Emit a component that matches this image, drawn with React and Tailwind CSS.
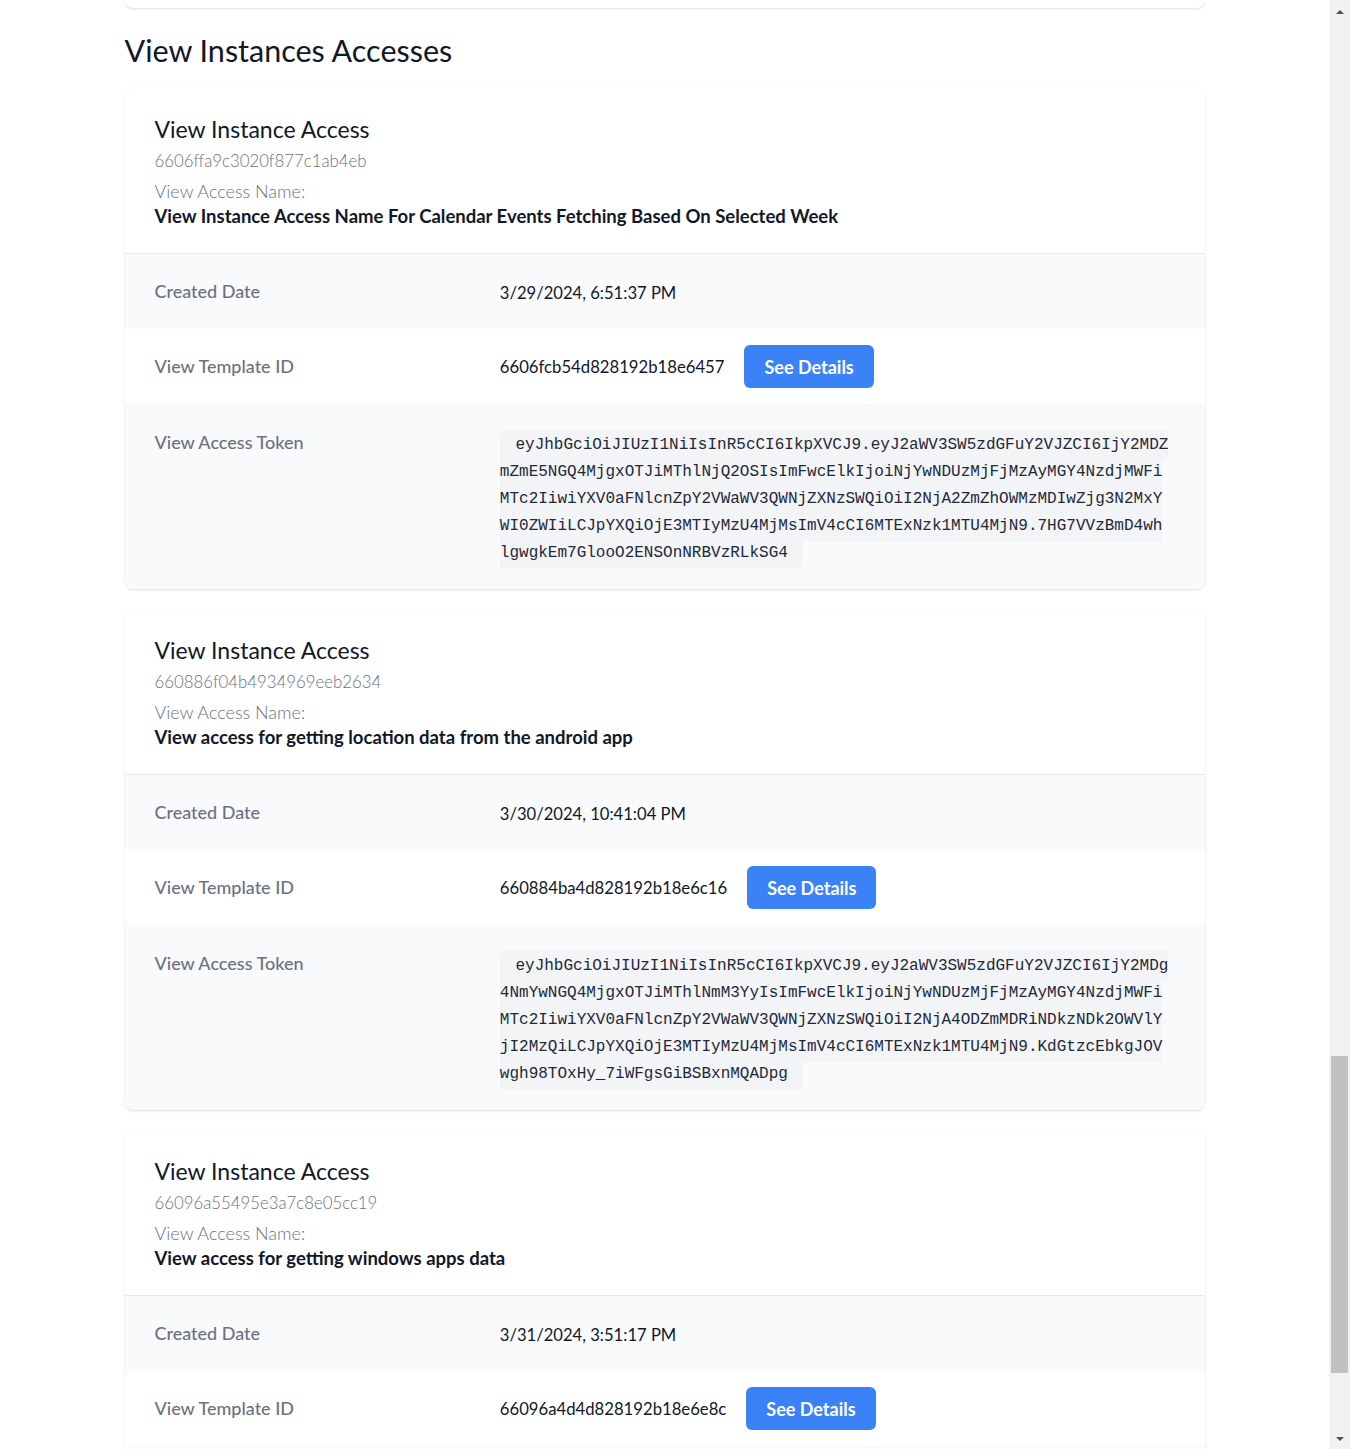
import React from "react";

const sans = { fontFamily: '"Segoe UI", Lato, "Liberation Sans", sans-serif' };
const mono = { fontFamily: '"Liberation Mono", "DejaVu Sans Mono", monospace' };

const accesses = [
  {
    id: "6606ffa9c3020f877c1ab4eb",
    name: "View Instance Access Name For Calendar Events Fetching Based On Selected Week",
    created: "3/29/2024, 6:51:37 PM",
    templateId: "6606fcb54d828192b18e6457",
    token:
      "eyJhbGciOiJIUzI1NiIsInR5cCI6IkpXVCJ9.eyJ2aWV3SW5zdGFuY2VJZCI6IjY2MDZmZmE5NGQ4MjgxOTJiMThlNjQ2OSIsImFwcElkIjoiNjYwNDUzMjFjMzAyMGY4NzdjMWFiMTc2IiwiYXV0aFNlcnZpY2VWaWV3QWNjZXNzSWQiOiI2NjA2ZmZhOWMzMDIwZjg3N2MxYWI0ZWIiLCJpYXQiOjE3MTIyMzU4MjMsImV4cCI6MTExNzk1MTU4MjN9.7HG7VVzBmD4whlgwgkEm7GlooO2ENSOnNRBVzRLkSG4",
  },
  {
    id: "660886f04b4934969eeb2634",
    name: "View access for getting location data from the android app",
    created: "3/30/2024, 10:41:04 PM",
    templateId: "660884ba4d828192b18e6c16",
    token:
      "eyJhbGciOiJIUzI1NiIsInR5cCI6IkpXVCJ9.eyJ2aWV3SW5zdGFuY2VJZCI6IjY2MDg4NmYwNGQ4MjgxOTJiMThlNmM3YyIsImFwcElkIjoiNjYwNDUzMjFjMzAyMGY4NzdjMWFiMTc2IiwiYXV0aFNlcnZpY2VWaWV3QWNjZXNzSWQiOiI2NjA4ODZmMDRiNDkzNDk2OWVlYjI2MzQiLCJpYXQiOjE3MTIyMzU4MjMsImV4cCI6MTExNzk1MTU4MjN9.KdGtzcEbkgJOVwgh98TOxHy_7iWFgsGiBSBxnMQADpg",
  },
  {
    id: "66096a55495e3a7c8e05cc19",
    name: "View access for getting windows apps data",
    created: "3/31/2024, 3:51:17 PM",
    templateId: "66096a4d4d828192b18e6e8c",
    token:
      "eyJhbGciOiJIUzI1NiIsInR5cCI6IkpXVCJ9.eyJ2aWV3SW5zdGFuY2VJZCI6IjY2MDk2YTU1NDk1ZTNhN2M4ZTA1Y2MxOSIsImFwcElkIjoiNjYwNDUzMjFjMzAyMGY4NzdjMWFi",
  },
];

function AccessCard({ a }) {
  return (
    <div className="rounded-lg bg-white shadow overflow-hidden">
      <div className="px-[30px] pt-[25px] pb-[26px] border-b border-gray-200">
        <h3 className="text-[23px] leading-8 text-gray-900">View Instance Access</h3>
        <p className="mt-[2px] text-[16.8px] leading-7 font-light text-gray-500">{a.id}</p>
        <p className="mt-[2px] text-lg leading-7 font-light text-gray-500">View Access Name:</p>
        <p className="text-[18.5px] leading-[22px] font-bold text-gray-900">{a.name}</p>
      </div>
      <dl>
        <div className="grid grid-cols-3 gap-4 px-[30px] py-4 bg-gray-50">
          <dt className="text-lg leading-[43px] font-medium text-gray-500">Created Date</dt>
          <dd className="col-span-2 pt-1 text-[16.6px] leading-[39px] text-gray-900">{a.created}</dd>
        </div>
        <div className="grid grid-cols-3 gap-4 px-[30px] py-4 bg-white">
          <dt className="text-lg leading-[43px] font-medium text-gray-500">View Template ID</dt>
          <dd className="col-span-2 flex items-center gap-5 text-[16.7px] text-gray-900">
            <span className="pt-[3px]">{a.templateId}</span>
            <button className="h-[43px] px-5 rounded-md bg-[#3b82f6] text-white text-lg font-bold">See Details</button>
          </dd>
        </div>
        <div className="grid grid-cols-3 gap-4 px-[30px] bg-gray-50">
          <dt className="pt-4 text-lg leading-[44px] font-medium text-gray-500">View Access Token</dt>
          <dd className="col-span-2 pr-1 pt-[28px] pb-[22px] text-base/[27px]" style={mono}>
            <code className="px-1.5 py-1.5 rounded bg-gray-100 text-base/[27px] text-gray-800 whitespace-pre-wrap break-all" style={mono}>
              {" " + a.token + " "}
            </code>
          </dd>
        </div>
      </dl>
    </div>
  );
}

function Scrollbar() {
  return (
    <div className="w-[21px] shrink-0 bg-[#f1f1f1] flex flex-col items-center">
      <div className="h-[17px] flex items-center justify-center pt-[6px]">
        <div className="w-0 h-0 border-l-[4px] border-r-[4px] border-b-[4px] border-l-transparent border-r-transparent border-b-[#505050]" />
      </div>
      <div className="mt-[1039px] w-[17px] h-[317px] bg-[#c1c1c1]" />
      <div className="flex-1" />
      <div className="h-[17px] flex items-center justify-center pb-[4px]">
        <div className="w-0 h-0 border-l-[4px] border-r-[4px] border-t-[4px] border-l-transparent border-r-transparent border-t-[#505050]" />
      </div>
    </div>
  );
}

export default function App() {
  return (
    <div className="h-[1449px] overflow-hidden flex bg-white" style={sans}>
      <div className="flex-1 overflow-hidden">
        <div className="max-w-[1080px] mx-auto">
          <div className="h-2 rounded-b-lg bg-white shadow" />
          <h2 className="mt-6 mb-5 text-[30.5px] leading-9 text-gray-900">View Instances Accesses</h2>
          <div className="flex flex-col gap-5">
            {accesses.map((a) => (
              <AccessCard key={a.id} a={a} />
            ))}
          </div>
        </div>
      </div>
      <Scrollbar />
    </div>
  );
}
